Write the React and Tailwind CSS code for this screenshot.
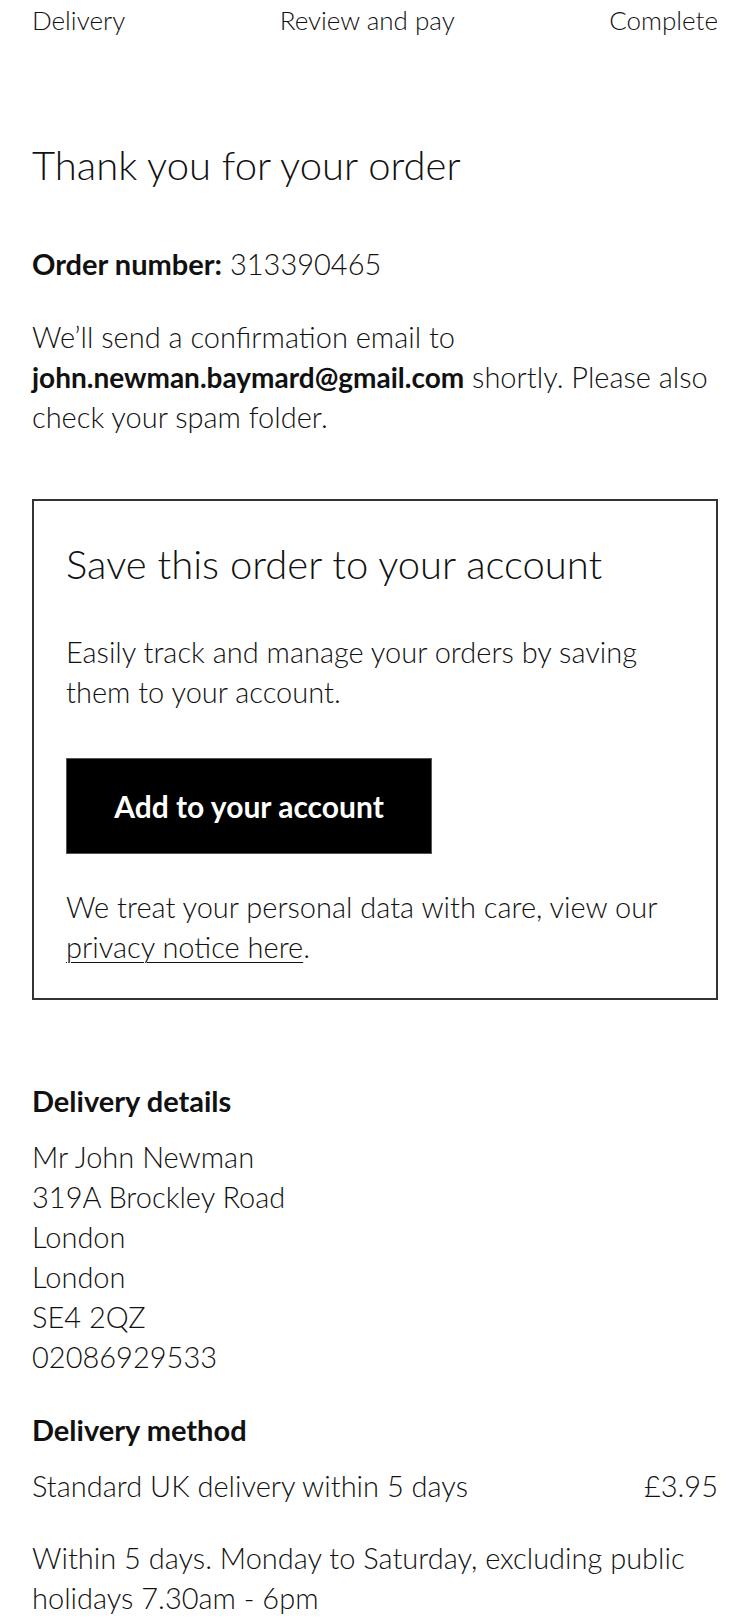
export default function App() {
  const font = { fontFamily: '"Lato", "Open Sans", sans-serif' };
  return (
    <div style={font} className="w-[750px] min-h-[1624px] bg-white text-[#111] font-light">
      <div className="flex justify-between px-8 text-[26px] leading-[40px]">
        <span>Delivery</span>
        <span>Review and pay</span>
        <span>Complete</span>
      </div>
      <div className="px-8">
        <h1 className="mt-[101px] text-[40px] leading-[48px] font-light">Thank you for your order</h1>
        <p className="mt-[55px] text-[29px] leading-[40px]">
          <span className="font-bold text-[29px]">Order number:</span> 313390465
        </p>
        <p className="mt-[33px] text-[29px] leading-[40px]">
          We’ll send a confirmation email to <span className="font-bold text-[28px]">john.newman.baymard@gmail.com</span> shortly. Please also check your spam folder.
        </p>
        <div className="mt-[62px] border-2 border-[#333] pl-8 pr-[44px] pt-[39px] pb-[31px]">
          <h2 className="text-[40px] leading-[48px] font-light">Save this order to your account</h2>
          <p className="mt-[44px] text-[29px] leading-[40px]">
            Easily track and manage your orders by saving them to your account.
          </p>
          <button className="mt-[46px] w-[366px] h-[96px] bg-black border border-[#555] text-white text-[30px] font-bold flex items-center justify-center">
            Add to your account
          </button>
          <p className="mt-[33px] text-[29px] leading-[40px]">
            We treat your personal data with care, view our <span className="underline underline-offset-4 decoration-1">privacy notice here</span>.
          </p>
        </div>
        <h3 className="mt-[81px] text-[29px] leading-[40px] font-bold">Delivery details</h3>
        <div className="mt-4 text-[29px] leading-[40px]">
          <div>Mr John Newman</div>
          <div>319A Brockley Road</div>
          <div>London</div>
          <div>London</div>
          <div>SE4 2QZ</div>
          <div>02086929533</div>
        </div>
        <h3 className="mt-[33px] text-[29px] leading-[40px] font-bold">Delivery method</h3>
        <div className="mt-4 flex justify-between text-[29px] leading-[40px]">
          <span>Standard UK delivery within 5 days</span>
          <span>£3.95</span>
        </div>
        <p className="mt-8 text-[29px] leading-[40px]">
          Within 5 days. Monday to Saturday, excluding public holidays 7.30am - 6pm
        </p>
      </div>
    </div>
  );
}
